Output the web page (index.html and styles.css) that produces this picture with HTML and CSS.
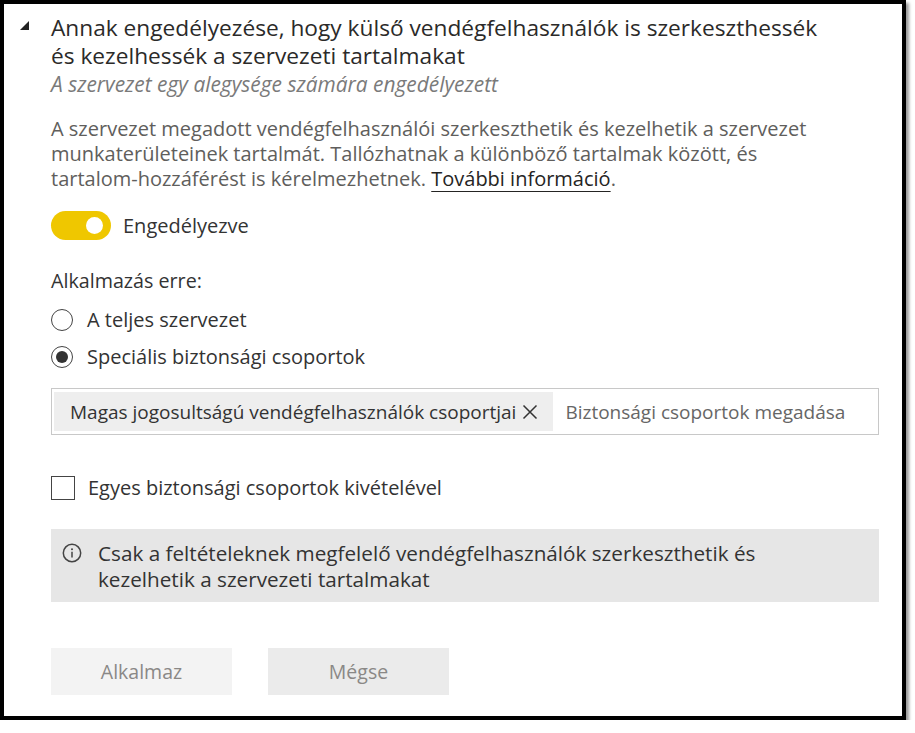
FILE: index.html
```html
<!DOCTYPE html>
<html lang="hu">
<head>
<meta charset="utf-8">
<title>Vendégfelhasználók</title>
<link rel="stylesheet" href="styles.css">
</head>
<body>
<div class="panel">
  <div class="caret-col"><span class="caret"></span></div>
  <div class="main">
    <h2 class="title">Annak engedélyezése, hogy külső vendégfelhasználók is szerkeszthessék<br>és kezelhessék a szervezeti tartalmakat</h2>
    <p class="scope">A szervezet egy alegysége számára engedélyezett</p>
    <p class="desc">A szervezet megadott vendégfelhasználói szerkeszthetik és kezelhetik a szervezet<br>munkaterületeinek tartalmát. Tallózhatnak a különböző tartalmak között, és<br>tartalom-hozzáférést is kérelmezhetnek. <a class="link" href="#">További információ</a>.</p>

    <div class="toggle-row">
      <span class="toggle"><span class="knob"></span></span>
      <span class="toggle-label">Engedélyezve</span>
    </div>

    <div class="apply-label">Alkalmazás erre:</div>
    <div class="radio-row radio-first"><span class="radio"></span><span>A teljes szervezet</span></div>
    <div class="radio-row"><span class="radio checked"><span class="dot"></span></span><span>Speciális biztonsági csoportok</span></div>

    <div class="picker">
      <span class="chip">Magas jogosultságú vendégfelhasználók csoportjai
        <svg class="chip-x" width="18" height="18" viewBox="0 0 18 18"><path d="M2.5 2.5 L15.5 15.5 M15.5 2.5 L2.5 15.5" stroke="#333" stroke-width="1.5" fill="none"/></svg>
      </span>
      <span class="placeholder">Biztonsági csoportok megadása</span>
    </div>

    <div class="check-row"><span class="checkbox"></span><span>Egyes biztonsági csoportok kivételével</span></div>

    <div class="info">
      <svg class="info-icon" width="20" height="20" viewBox="0 0 20 20"><circle cx="10" cy="10" r="8.7" stroke="#444" stroke-width="1.5" fill="none"/><circle cx="10" cy="6.2" r="1" fill="#444"/><path d="M10 8.7 V14.6" stroke="#444" stroke-width="1.5"/></svg>
      <span>Csak a feltételeknek megfelelő vendégfelhasználók szerkeszthetik és<br>kezelhetik a szervezeti tartalmakat</span>
    </div>

    <div class="buttons">
      <button class="btn btn-apply">Alkalmaz</button>
      <button class="btn btn-cancel">Mégse</button>
    </div>
  </div>
</div>
</body>
</html>
```
FILE: styles.css
```css
html, body {
  margin: 0;
  padding: 0;
  background: #fff;
}
body {
  font-family: "Open Sans", "Noto Sans", sans-serif;
  color: #333;
}
.panel {
  box-sizing: border-box;
  width: 906px;
  height: 720px;
  border: 4px solid #000;
  box-shadow: 3px 3px 3px #9a9a9a;
  display: flex;
  padding: 0 0 0 16px;
}
.caret-col {
  width: 10px;
  flex: none;
  padding-top: 17px;
}
.caret {
  display: block;
  width: 0;
  height: 0;
  border-left: 9px solid transparent;
  border-bottom: 9px solid #222;
}
.main {
  margin-left: 21px;
  width: 828px;
  display: flex;
  flex-direction: column;
}
.title {
  margin: 10px 0 0;
  font-size: 22.7px;
  font-weight: 400;
  line-height: 28px;
  color: #2b2a29;
}
.scope {
  margin: 2px 0 0;
  font-size: 20.9px;
  font-style: italic;
  line-height: 24px;
  color: #7a7a7a;
}
.desc {
  margin: 20px 0 0;
  font-size: 20px;
  line-height: 25px;
  color: #605e5c;
}
.link {
  color: #252423;
  text-decoration: underline;
  text-underline-offset: 5px;
  text-decoration-thickness: 1px;
}
.toggle-row {
  display: flex;
  align-items: center;
  margin-top: 20px;
  gap: 12px;
  font-size: 20px;
  line-height: 25px;
  color: #333;
}
.toggle {
  width: 60px;
  height: 29px;
  border-radius: 15px;
  background: #efc700;
  display: flex;
  align-items: center;
  justify-content: flex-end;
  box-sizing: border-box;
  padding-right: 8px;
}
.knob {
  width: 17px;
  height: 17px;
  border-radius: 50%;
  background: #fff;
}
.apply-label {
  margin-top: 28px;
  font-size: 19.7px;
  line-height: 25px;
  color: #333;
}
.radio-row {
  display: flex;
  align-items: center;
  gap: 14px;
  font-size: 20px;
  line-height: 25px;
  color: #333;
  height: 37px;
}
.radio-first { margin-top: 8px; }
.radio {
  box-sizing: border-box;
  width: 22px;
  height: 22px;
  border: 1.5px solid #444;
  border-radius: 50%;
  display: flex;
  align-items: center;
  justify-content: center;
}
.dot {
  width: 12px;
  height: 12px;
  border-radius: 50%;
  background: #333;
}
.picker {
  margin-top: 13px;
  box-sizing: border-box;
  height: 47px;
  border: 1px solid #c8c8c8;
  display: flex;
  align-items: center;
  padding: 0 2px;
  gap: 12px;
}
.chip {
  height: 39px;
  background: #eeeeee;
  display: flex;
  align-items: center;
  padding: 0 14px 0 16px;
  gap: 5px;
  font-size: 19px;
  color: #333;
}
.placeholder {
  font-size: 19px;
  color: #666;
}
.check-row {
  margin-top: 40px;
  display: flex;
  align-items: center;
  gap: 13px;
  font-size: 20px;
  line-height: 25px;
  color: #333;
}
.checkbox {
  box-sizing: border-box;
  width: 24px;
  height: 24px;
  border: 1.5px solid #444;
}
.info {
  margin-top: 29px;
  background: #e6e6e6;
  height: 73px;
  box-sizing: border-box;
  padding: 11px 12px 0 11px;
  display: flex;
  align-items: flex-start;
  gap: 16px;
  font-size: 20.7px;
  line-height: 26px;
  color: #333;
}
.info-icon {
  margin-top: 3px;
  flex: none;
}
.buttons {
  margin-top: 46px;
  display: flex;
  gap: 36px;
}
.btn {
  width: 181px;
  height: 47px;
  border: none;
  font-family: inherit;
  font-size: 19.5px;
  color: #8a8886;
  padding: 0;
}
.btn-apply { background: #f3f3f3; }
.btn-cancel { background: #ebebeb; }
```
